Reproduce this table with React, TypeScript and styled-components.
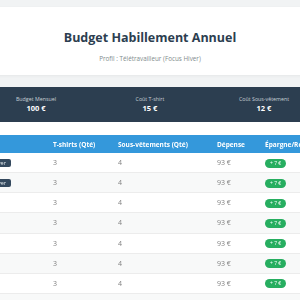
import { FC } from "react"
import styled, { createGlobalStyle } from "styled-components"

const GlobalStyle = createGlobalStyle`
  html, body {
    margin: 0;
    padding: 0;
    background: #f1f3f4;
    font-family: "Open Sans", "Noto Sans", sans-serif;
  }
`

interface Month {
  name: string
  season?: string
}

const MONTHS: Month[] = [
  { name: "Janvier", season: "Hiver" },
  { name: "Février", season: "Hiver" },
  { name: "Mars" },
  { name: "Avril" },
  { name: "Mai" },
  { name: "Juin" },
  { name: "Juillet" },
  { name: "Août" },
  { name: "Septembre" },
  { name: "Octobre" },
  { name: "Novembre" },
  { name: "Décembre", season: "Hiver" },
]

const SUMMARY = [
  { label: "Budget Mensuel", value: "100 €" },
  { label: "Coût T-shirt", value: "15 €" },
  { label: "Coût Sous-vêtement", value: "12 €" },
]

const App: FC = () => {
  return (
    <>
      <GlobalStyle />
      <Page>
        <Container>
          <HeaderCard>
            <Title>Budget Habillement Annuel</Title>
            <Subtitle>Profil : Télétravailleur (Focus Hiver)</Subtitle>
          </HeaderCard>

          <SummaryBar>
            {SUMMARY.map((item) => (
              <SummaryItem key={item.label}>
                <span className="label">{item.label}</span>
                <span className="value">{item.value}</span>
              </SummaryItem>
            ))}
          </SummaryBar>

          <TableCard>
            <Table>
              <colgroup>
                <col style={{ width: 103 }} />
                <col style={{ width: 65 }} />
                <col style={{ width: 99 }} />
                <col style={{ width: 48 }} />
                <col />
              </colgroup>
              <thead>
                <tr>
                  <th>Mois</th>
                  <th>T-shirts (Qté)</th>
                  <th>Sous-vêtements (Qté)</th>
                  <th>Dépense</th>
                  <th>Épargne/Reste</th>
                </tr>
              </thead>
              <tbody>
                {MONTHS.map((month) => (
                  <tr key={month.name}>
                    <td>
                      <MonthName>
                        {month.name}
                        {month.season && <SeasonTag>{month.season}</SeasonTag>}
                      </MonthName>
                    </td>
                    <td>3</td>
                    <td>4</td>
                    <td>93 €</td>
                    <td>
                      <SavingPill>+ 7 €</SavingPill>
                    </td>
                  </tr>
                ))}
              </tbody>
            </Table>
          </TableCard>
        </Container>
      </Page>
    </>
  )
}

export default App

const Page = styled.div`
  display: flex;
  flex-direction: column;
  align-items: center;
  padding-top: 7px;
`

const Container = styled.div`
  width: 420px;
  flex-shrink: 0;
  display: flex;
  flex-direction: column;
`

const HeaderCard = styled.div`
  background: #ffffff;
  height: 68px;
  box-sizing: border-box;
  padding-top: 23px;
  display: flex;
  flex-direction: column;
  align-items: center;
  box-shadow: 0 1px 3px rgba(0, 0, 0, 0.05);
  margin-bottom: 12px;
`

const Title = styled.h1`
  margin: 0;
  font-size: 12.5px;
  line-height: 16px;
  font-weight: 700;
  color: #2c3e50;
`

const Subtitle = styled.p`
  margin: 9px 0 0;
  font-size: 6.3px;
  line-height: 8px;
  color: #7f8c8d;
`

const SummaryBar = styled.div`
  background: #2c3e50;
  height: 35px;
  display: flex;
  justify-content: center;
  align-items: center;
  gap: 10px;
`

const SummaryItem = styled.div`
  width: 104px;
  display: flex;
  flex-direction: column;
  align-items: center;

  .label {
    font-size: 5.3px;
    line-height: 8px;
    color: #c8d0d6;
  }

  .value {
    font-size: 7.5px;
    line-height: 11px;
    font-weight: 700;
    color: #ffffff;
  }
`

const TableCard = styled.div`
  background: #ffffff;
  padding-top: 13px;
`

const Table = styled.table`
  width: 100%;
  border-collapse: collapse;
  table-layout: fixed;
  will-change: transform;

  th {
    background: #3498db;
    color: #ffffff;
    font-size: 6.5px;
    font-weight: 700;
    text-align: left;
    height: 18px;
    padding: 0 10px;
    white-space: nowrap;
    overflow: hidden;
  }

  td {
    height: 19.15px;
    padding: 0 10px;
    font-size: 7px;
    color: #808080;
    border-bottom: 1px solid #ececec;
    white-space: nowrap;
  }

  td:first-child {
    padding-left: 18px;
  }

  tbody tr:nth-child(even) td {
    background: #f8f9f9;
  }
`

const MonthName = styled.span`
  display: inline-flex;
  align-items: center;
  gap: 6px;
  font-size: 7px;
  font-weight: 600;
  color: #2c3e50;
`

const SeasonTag = styled.span`
  background: #34495e;
  color: #dfe6ea;
  font-size: 5.5px;
  font-weight: 400;
  line-height: 8px;
  padding: 0 5px;
  border-radius: 2px;
`

const SavingPill = styled.span`
  display: inline-block;
  background: #27ae60;
  color: #ffffff;
  font-size: 5px;
  line-height: 9px;
  padding: 0 5px;
  border-radius: 5px;
`
